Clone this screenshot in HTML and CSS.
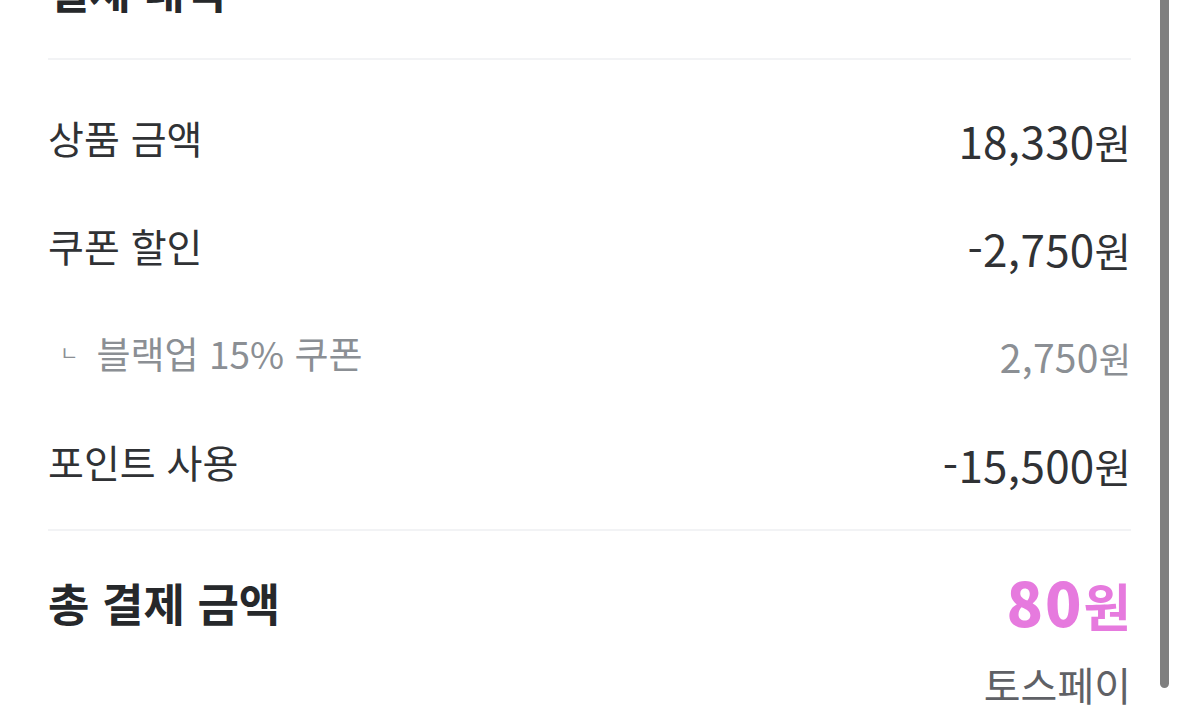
FILE: index.html
```html
<!DOCTYPE html>
<html lang="ko">
<head>
<meta charset="utf-8">
<link rel="stylesheet" href="styles.css">
</head>
<body>
<main class="page">
  <h2 class="title">결제 내역</h2>
  <div class="divider"></div>
  <section class="list">
    <div class="row">
      <span class="label">상품 금액</span>
      <span class="value">18,330<span class="unit">원</span></span>
    </div>
    <div class="row">
      <span class="label">쿠폰 할인</span>
      <span class="value">-2,750<span class="unit">원</span></span>
    </div>
    <div class="row sub">
      <span class="label"><span class="hook">ㄴ</span>블랙업 15% 쿠폰</span>
      <span class="value">2,750<span class="unit">원</span></span>
    </div>
    <div class="row">
      <span class="label">포인트 사용</span>
      <span class="value">-15,500<span class="unit">원</span></span>
    </div>
  </section>
  <div class="divider"></div>
  <section class="total">
    <div class="total-row">
      <span class="total-label">총 결제 금액</span>
      <span class="total-value">80<span class="unit">원</span></span>
    </div>
    <div class="method">토스페이</div>
  </section>
</main>
<div class="scrollbar"></div>
</body>
</html>
```
FILE: styles.css
```css
html, body {
  margin: 0;
  padding: 0;
  background: #ffffff;
  overflow: hidden;
}
body {
  font-family: "Noto Sans CJK KR", "Noto Sans", sans-serif;
  color: #333538;
  height: 727px;
}
.page {
  padding: 0 48px;
  margin-top: -40px;
}
.title {
  margin: 0;
  font-size: 45px;
  font-weight: 700;
  line-height: 60px;
  color: #26282b;
}
.divider {
  height: 2px;
  background: #f2f3f5;
  margin-top: 38px;
}
.list {
  padding: 26px 0 11px;
}
.list + .divider {
  margin-top: 0;
}
.row {
  height: 108px;
  display: flex;
  justify-content: space-between;
  align-items: center;
}
.label {
  font-size: 39px;
  font-weight: 400;
  line-height: 1;
  color: #303235;
  margin-top: -6px;
}
.value {
  font-size: 44px;
  font-weight: 400;
  line-height: 1;
  color: #303235;
  letter-spacing: 0.3px;
}
.unit {
  font-size: 0.9em;
  letter-spacing: 0;
}
.sub .label {
  color: #8b8f94;
  font-size: 37px;
  display: flex;
  align-items: center;
}
.sub .value {
  color: #8b8f94;
  font-size: 39px;
}
.hook {
  font-size: 20px;
  margin: 0 18px 0 12px;
}
.total {
  padding-top: 40px;
}
.total-row {
  display: flex;
  justify-content: space-between;
  align-items: center;
}
.total-label {
  font-size: 45px;
  font-weight: 700;
  line-height: 60px;
  color: #26282b;
}
.total-value {
  font-size: 60px;
  font-weight: 900;
  line-height: 60px;
  color: #e67ade;
  letter-spacing: 2px;
}
.total-value .unit {
  font-size: 0.86em;
  font-weight: 700;
  letter-spacing: 0;
}
.method {
  text-align: right;
  font-size: 40px;
  line-height: 50px;
  color: #5f6166;
  margin-top: 24px;
}
.scrollbar {
  position: fixed;
  top: -10px;
  left: 1160px;
  width: 9px;
  height: 698px;
  border-radius: 5px;
  background: #7f7f7f;
}
```
